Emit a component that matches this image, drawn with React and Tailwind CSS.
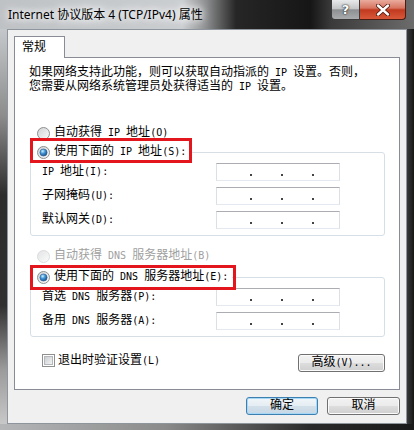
import React from 'react';

// split a label into CJK and ASCII runs; ASCII gets a 6px-wide mono face like SimSun's half width
function Z({ t }) {
  return t
    .split(/([ -~]+)/)
    .filter(Boolean)
    .map((s, i) =>
      /[ -~]/.test(s) ? (
        <span key={i} className="font-['DejaVu_Sans_Mono','Liberation_Mono',monospace] text-[10px]">{s}</span>
      ) : (
        <span key={i}>{s}</span>
      )
    );
}

const Radio = ({ checked, disabled }) => (
  <svg width="13" height="13" viewBox="0 0 13 13" className="shrink-0">
    <defs>
      <linearGradient id="rbg" x1="0" y1="0" x2="1" y2="1">
        <stop offset="0" stopColor="#cfd1d3" />
        <stop offset="1" stopColor="#fbfbfb" />
      </linearGradient>
      <radialGradient id="rdot" cx="0.38" cy="0.32" r="0.75">
        <stop offset="0" stopColor="#c8f0ff" />
        <stop offset="0.45" stopColor="#3f93d6" />
        <stop offset="1" stopColor="#174a7e" />
      </radialGradient>
    </defs>
    <circle
      cx="6.5"
      cy="6.5"
      r="6"
      fill="url(#rbg)"
      stroke={disabled ? '#c4c6c8' : '#8e8f8f'}
      opacity={disabled ? 0.6 : 1}
    />
    {checked && <circle cx="6.5" cy="6.5" r="3.6" fill="url(#rdot)" stroke="#2c5d8e" strokeWidth="0.6" />}
  </svg>
);

const Check = () => (
  <svg width="13" height="13" viewBox="0 0 13 13" className="shrink-0">
    <defs>
      <linearGradient id="cbg" x1="0" y1="0" x2="1" y2="1">
        <stop offset="0" stopColor="#c9cbcd" />
        <stop offset="1" stopColor="#f6f6f6" />
      </linearGradient>
    </defs>
    <rect x="0.5" y="0.5" width="12" height="12" fill="#fff" stroke="#8e8f8f" />
    <rect x="2.5" y="2.5" width="8" height="8" fill="url(#cbg)" stroke="#b4b8bc" />
  </svg>
);

const IpBox = () => (
  <div className="flex h-[18px] w-[124px] items-end gap-[29px] border border-t-[#abadb3] border-r-[#dbdfe6] border-b-[#e3e9ef] border-l-[#dbdfe6] bg-white pb-[4px] pl-[33px]">
    <span className="h-[2px] w-[2px] bg-[#444]" />
    <span className="h-[2px] w-[2px] bg-[#444]" />
    <span className="h-[2px] w-[2px] bg-[#444]" />
  </div>
);

const Row = ({ label }) => (
  <div className="flex items-center">
    <div className="w-[185px] pl-[11px] whitespace-nowrap">
      <Z t={label} />
    </div>
    <IpBox />
  </div>
);

export default function App() {
  return (
    <div className="flex h-[430px] w-[414px] flex-col overflow-hidden bg-[#2a2a2a] font-['Liberation_Mono','Noto_Sans_CJK_SC',monospace] text-[12px] leading-[14px] text-black">
      {/* title bar */}
      <div className="flex h-[29px] shrink-0 items-center bg-[linear-gradient(to_right,#bfc2c5_0%,#cbced1_44%,#8a8b8c_50%,#262626_57%,#161616_75%,#3a3a3a_80%,#6c6c6c_100%)]">
        <span className="pl-[8px] font-['Noto_Sans','Noto_Sans_CJK_SC',sans-serif] text-[12px] [text-shadow:0_0_6px_#fff,0_0_10px_#fff,0_0_14px_#fff]">
          Internet 协议版本 4 (TCP/IPv4) 属性
        </span>
        <div className="mr-[8px] ml-auto flex self-start">
          <div className="flex h-[20px] w-[29px] items-center justify-center rounded-bl-[4px] border border-t-0 border-[#3b3b3b] bg-[linear-gradient(to_bottom,#e9eaeb_0%,#c4c6c8_45%,#8d9092_52%,#a9abad_100%)] font-['DejaVu_Sans',sans-serif] text-[13px] font-bold text-white [text-shadow:0_0_2px_#222,0_0_1px_#000]">
            ?
          </div>
          <div className="flex h-[20px] w-[46px] items-center justify-center rounded-br-[4px] border border-t-0 border-l-0 border-[#4a1c12] bg-[linear-gradient(to_bottom,#e9ab9d_0%,#d77561_42%,#c13a1f_52%,#d9583a_100%)]">
            <svg width="14" height="12" viewBox="0 0 14 12">
              <path d="M2 1.5 L12 10.5 M12 1.5 L2 10.5" stroke="#4a1408" strokeWidth="4" strokeLinecap="round" />
              <path d="M2 1.5 L12 10.5 M12 1.5 L2 10.5" stroke="#fff" strokeWidth="2.4" strokeLinecap="round" />
            </svg>
          </div>
        </div>
      </div>

      {/* window body */}
      <div className="flex flex-1">
        <div className="w-[7px] bg-[linear-gradient(to_bottom,#c5c8cb_0%,#8c8c8c_22%,#2c2c2c_42%,#303030_70%,#9a9a9a_86%,#c8c8c8_100%)]" />
        <div className="flex flex-1 flex-col border border-[#8e959c] bg-[#f0f0f0] px-[6px] pt-[6px]">
          {/* tab */}
          <div className="relative z-10 -mb-px flex h-[22px] w-[51px] items-center border border-b-0 border-[#898c95] bg-white pl-[7px]">
            常规
          </div>

          {/* tab panel */}
          <div className="flex h-[333px] flex-col border border-[#898c95] bg-white">
            <p className="mt-[8px] pl-[14px] whitespace-nowrap">
              <Z t="如果网络支持此功能，则可以获取自动指派的 IP 设置。否则，" />
              <br />
              <Z t="您需要从网络系统管理员处获得适当的 IP 设置。" />
            </p>

            <div className="mt-[31px] flex h-[16px] items-center gap-[4px] pl-[22px] whitespace-nowrap">
              <Radio />
              <span>
                <Z t="自动获得 IP 地址(O)" />
              </span>
            </div>

            <div className="mt-[11px] ml-[15px] w-[355px] rounded-[3px] border border-[#d5dfe5] pb-[6px]">
              <div className="relative -mt-[9px] flex h-[16px] w-[158px] items-center gap-[4px] bg-white pl-[6px] whitespace-nowrap">
                <Radio checked />
                <span>
                  <Z t="使用下面的 IP 地址(S):" />
                </span>
                <div className="pointer-events-none absolute -top-[6px] -left-[1px] h-[25px] w-[162px] border-[3px] border-[#e2161c]" />
              </div>
              <div className="mt-[3px] flex flex-col gap-[6px]">
                <Row label="IP 地址(I):" />
                <Row label="子网掩码(U):" />
                <Row label="默认网关(D):" />
              </div>
            </div>

            <div className="mt-[12px] flex h-[16px] items-center gap-[4px] pl-[22px] whitespace-nowrap text-[#a0a0a0]">
              <Radio disabled />
              <span>
                <Z t="自动获得 DNS 服务器地址(B)" />
              </span>
            </div>

            <div className="mt-[13px] ml-[15px] w-[355px] rounded-[3px] border border-[#d5dfe5] pb-[6px]">
              <div className="relative -mt-[9px] flex h-[16px] w-[201px] items-center gap-[4px] bg-white pl-[6px] whitespace-nowrap">
                <Radio checked />
                <span>
                  <Z t="使用下面的 DNS 服务器地址(E):" />
                </span>
                <div className="pointer-events-none absolute -top-[4px] -left-[1px] h-[25px] w-[206px] border-[3px] border-[#e2161c]" />
              </div>
              <div className="mt-[3px] flex flex-col gap-[6px]">
                <Row label="首选 DNS 服务器(P):" />
                <Row label="备用 DNS 服务器(A):" />
              </div>
            </div>

            <div className="mt-[17px] flex items-start justify-between pr-[14px] pl-[27px]">
              <label className="flex h-[13px] items-center gap-[3px] whitespace-nowrap">
                <Check />
                <span>
                  <Z t="退出时验证设置(L)" />
                </span>
              </label>
              <button className="flex h-[18px] w-[87px] items-center justify-center rounded-[3px] border border-[#707070] bg-[linear-gradient(to_bottom,#f2f2f2_0%,#ebebeb_50%,#dddddd_51%,#cfcfcf_100%)] whitespace-nowrap shadow-[inset_0_0_0_1px_#fbfbfb]">
                <Z t="高级(V)..." />
              </button>
            </div>
          </div>

          {/* dialog buttons */}
          <div className="mt-[7px] flex justify-end gap-[9px]">
            <button className="flex h-[18px] w-[72px] items-center justify-center rounded-[3px] border border-[#3c7fb1] bg-[linear-gradient(to_bottom,#f1f6f9_0%,#e4edf3_50%,#d3e0ea_51%,#c6d7e4_100%)] shadow-[inset_0_0_0_1px_#a6d8f6]">
              确定
            </button>
            <button className="flex h-[18px] w-[73px] items-center justify-center rounded-[3px] border border-[#707070] bg-[linear-gradient(to_bottom,#f2f2f2_0%,#ebebeb_50%,#dddddd_51%,#cfcfcf_100%)] shadow-[inset_0_0_0_1px_#fbfbfb]">
              取消
            </button>
          </div>
        </div>
        <div className="w-[7px] bg-[linear-gradient(to_right,#3a3a3a,#151515)]" />
      </div>
      <div className="h-[6px] shrink-0 bg-[linear-gradient(to_right,#b4b6b8_0%,#8a8a8a_40%,#2a2a2a_75%,#1a1a1a_100%)]" />
    </div>
  );
}
